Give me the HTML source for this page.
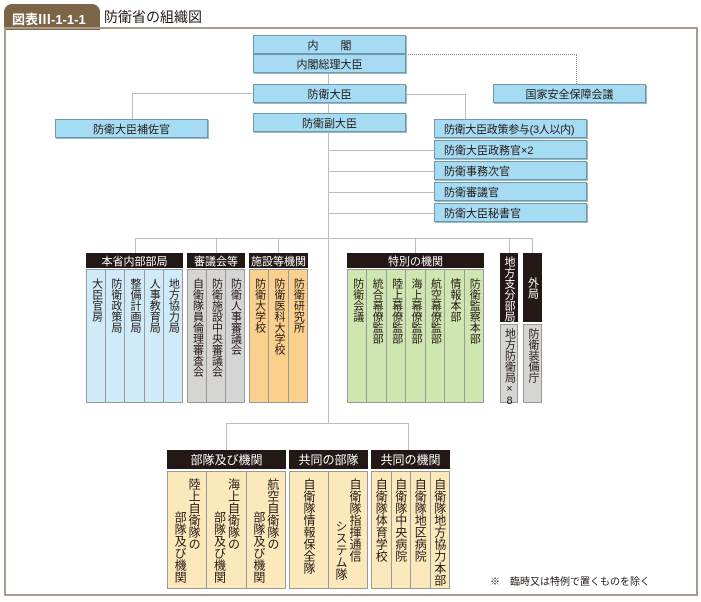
<!DOCTYPE html>
<html><head><meta charset="utf-8"><style>
*{margin:0;padding:0;box-sizing:border-box}
body{width:701px;height:602px;background:#fff;position:relative;overflow:hidden;font-family:"Liberation Sans","Noto Sans CJK JP",sans-serif;color:#231815}
.a{position:absolute}
.bx{position:absolute;background:#a6dbf4;border:1px solid #6f98ad;font-size:11px;display:flex;align-items:center;justify-content:center;height:19px;box-shadow:1px 1px 0 #9bb;white-space:nowrap}
.lt{justify-content:flex-start;padding-left:9px}
.h{position:absolute;background:#c0bcb8;}
.hd{position:absolute;background:#231815;color:#fff;font-size:11px;display:flex;align-items:center;justify-content:center;white-space:nowrap}
.grp{position:absolute;display:flex;border:1px solid #999}
.col{flex:1;writing-mode:vertical-rl;font-size:11px;line-height:13px;padding-top:8px;display:flex;justify-content:flex-start;border-left:1px solid #999;align-items:center;white-space:nowrap}
.col:first-child{border-left:none}
.bc{font-size:12px;line-height:14px;padding-top:6px}
.mc{flex:1;border-left:1px solid #999;display:flex;flex-direction:row-reverse;justify-content:center;font-size:12px;line-height:14px}
.mc span{writing-mode:vertical-rl;white-space:nowrap;display:block;padding-top:6px}
.mc span+span{padding-top:39px}
</style></head><body>
<div class="a" style="left:4px;top:4px;width:96px;height:26px;background:#7c6546;border-radius:8px 8px 0 0;color:#fff;font-size:13px;font-weight:bold;padding:5px 0 0 8px">図表Ⅲ-1-1-1</div>
<div class="a" style="left:104px;top:7px;font-size:14px">防衛省の組織図</div>
<div class="a" style="left:4px;top:27px;width:694px;height:569px;border:2px solid #ab9c87"></div>

<div class="h" style="left:328px;top:73px;width:1px;height:351px"></div>
<div class="h" style="left:132px;top:93px;width:121px;height:1px"></div>
<div class="h" style="left:132px;top:93px;width:1px;height:26px"></div>
<div class="h" style="left:406px;top:94px;width:59px;height:1px"></div>
<div class="h" style="left:465px;top:94px;width:1px;height:25px"></div>
<div class="a" style="left:406px;top:54px;width:171px;height:30px;border-top:1px dotted #888;border-right:1px dotted #888"></div>
<div class="h" style="left:328px;top:150px;width:106px;height:1px"></div>
<div class="h" style="left:328px;top:171px;width:106px;height:1px"></div>
<div class="h" style="left:328px;top:192px;width:106px;height:1px"></div>
<div class="h" style="left:328px;top:213px;width:106px;height:1px"></div>
<div class="h" style="left:135px;top:238px;width:398px;height:1px"></div>
<div class="h" style="left:135px;top:238px;width:1px;height:15px"></div>
<div class="h" style="left:216px;top:238px;width:1px;height:15px"></div>
<div class="h" style="left:278px;top:238px;width:1px;height:15px"></div>
<div class="h" style="left:415px;top:238px;width:1px;height:15px"></div>
<div class="h" style="left:509px;top:238px;width:1px;height:15px"></div>
<div class="h" style="left:532px;top:238px;width:1px;height:15px"></div>
<div class="h" style="left:226px;top:423px;width:183px;height:1px"></div>
<div class="h" style="left:226px;top:423px;width:1px;height:27px"></div>
<div class="h" style="left:408px;top:423px;width:1px;height:27px"></div>

<div class="bx" style="left:253px;top:35px;width:153px">内　　閣</div>
<div class="bx" style="left:253px;top:54px;width:153px">内閣総理大臣</div>
<div class="bx" style="left:253px;top:84px;width:153px">防衛大臣</div>
<div class="bx" style="left:253px;top:113px;width:153px">防衛副大臣</div>
<div class="bx" style="left:55px;top:119px;width:153px">防衛大臣補佐官</div>
<div class="bx" style="left:493px;top:84px;width:153px">国家安全保障会議</div>
<div class="bx lt" style="left:434px;top:119px;width:153px;letter-spacing:-0.3px">防衛大臣政策参与(3人以内)</div>
<div class="bx lt" style="left:434px;top:140px;width:153px">防衛大臣政務官×2</div>
<div class="bx lt" style="left:434px;top:161px;width:153px">防衛事務次官</div>
<div class="bx lt" style="left:434px;top:182px;width:153px">防衛審議官</div>
<div class="bx lt" style="left:434px;top:203px;width:153px">防衛大臣秘書官</div>

<div class="hd" style="left:86px;top:253px;width:97px;height:15px">本省内部部局</div>
<div class="grp" style="left:86px;top:269px;width:97px;height:134px;background:#cfeaf8">
<div class="col">大臣官房</div><div class="col">防衛政策局</div><div class="col">整備計画局</div><div class="col">人事教育局</div><div class="col">地方協力局</div></div>
<div class="hd" style="left:187px;top:253px;width:58px;height:15px">審議会等</div>
<div class="grp" style="left:187px;top:269px;width:58px;height:134px;background:#d5d5d4">
<div class="col">自衛隊員倫理審査会</div><div class="col">防衛施設中央審議会</div><div class="col">防衛人事審議会</div></div>
<div class="hd" style="left:249px;top:253px;width:59px;height:15px">施設等機関</div>
<div class="grp" style="left:249px;top:269px;width:59px;height:134px;background:#fbd08d">
<div class="col">防衛大学校</div><div class="col">防衛医科大学校</div><div class="col">防衛研究所</div></div>
<div class="hd" style="left:347px;top:253px;width:137px;height:15px">特別の機関</div>
<div class="grp" style="left:347px;top:269px;width:137px;height:134px;background:#cfe6b0">
<div class="col">防衛会議</div><div class="col">統合幕僚監部</div><div class="col">陸上幕僚監部</div><div class="col">海上幕僚監部</div><div class="col">航空幕僚監部</div><div class="col">情報本部</div><div class="col">防衛監察本部</div></div>
<div class="hd" style="left:500px;top:253px;width:18px;height:69px;writing-mode:vertical-rl;justify-content:flex-start;padding-top:3px">地方支分部局</div>
<div class="grp" style="left:500px;top:324px;width:18px;height:79px;background:#d5d5d4"><div class="col" style="padding-top:3px;text-orientation:upright">地方防衛局×8</div></div>
<div class="hd" style="left:523px;top:253px;width:19px;height:69px;writing-mode:vertical-rl">外局</div>
<div class="grp" style="left:523px;top:324px;width:19px;height:79px;background:#d5d5d4"><div class="col" style="padding-top:3px">防衛装備庁</div></div>

<div class="hd" style="left:167px;top:450px;width:119px;height:19px;font-size:12px">部隊及び機関</div>
<div class="grp" style="left:167px;top:471px;width:119px;height:118px;background:#fbe8bb">
<div class="mc" style="border-left:none"><span>陸上自衛隊の</span><span>部隊及び機関</span></div>
<div class="mc"><span>海上自衛隊の</span><span>部隊及び機関</span></div>
<div class="mc"><span>航空自衛隊の</span><span>部隊及び機関</span></div>
</div>
<div class="hd" style="left:289px;top:450px;width:79px;height:19px;font-size:12px">共同の部隊</div>
<div class="grp" style="left:289px;top:471px;width:79px;height:118px;background:#fbe8bb">
<div class="col bc">自衛隊情報保全隊</div>
<div class="mc"><span>自衛隊指揮通信</span><span style="padding-top:48px">システム隊</span></div>
</div>
<div class="hd" style="left:371px;top:450px;width:79px;height:19px;font-size:12px">共同の機関</div>
<div class="grp" style="left:371px;top:471px;width:79px;height:118px;background:#fbe8bb">
<div class="col bc">自衛隊体育学校</div><div class="col bc">自衛隊中央病院</div><div class="col bc">自衛隊地区病院</div><div class="col bc">自衛隊地方協力本部</div></div>

<div class="a" style="left:490px;top:573px;font-size:10px">※　臨時又は特例で置くものを除く</div>
</body></html>
